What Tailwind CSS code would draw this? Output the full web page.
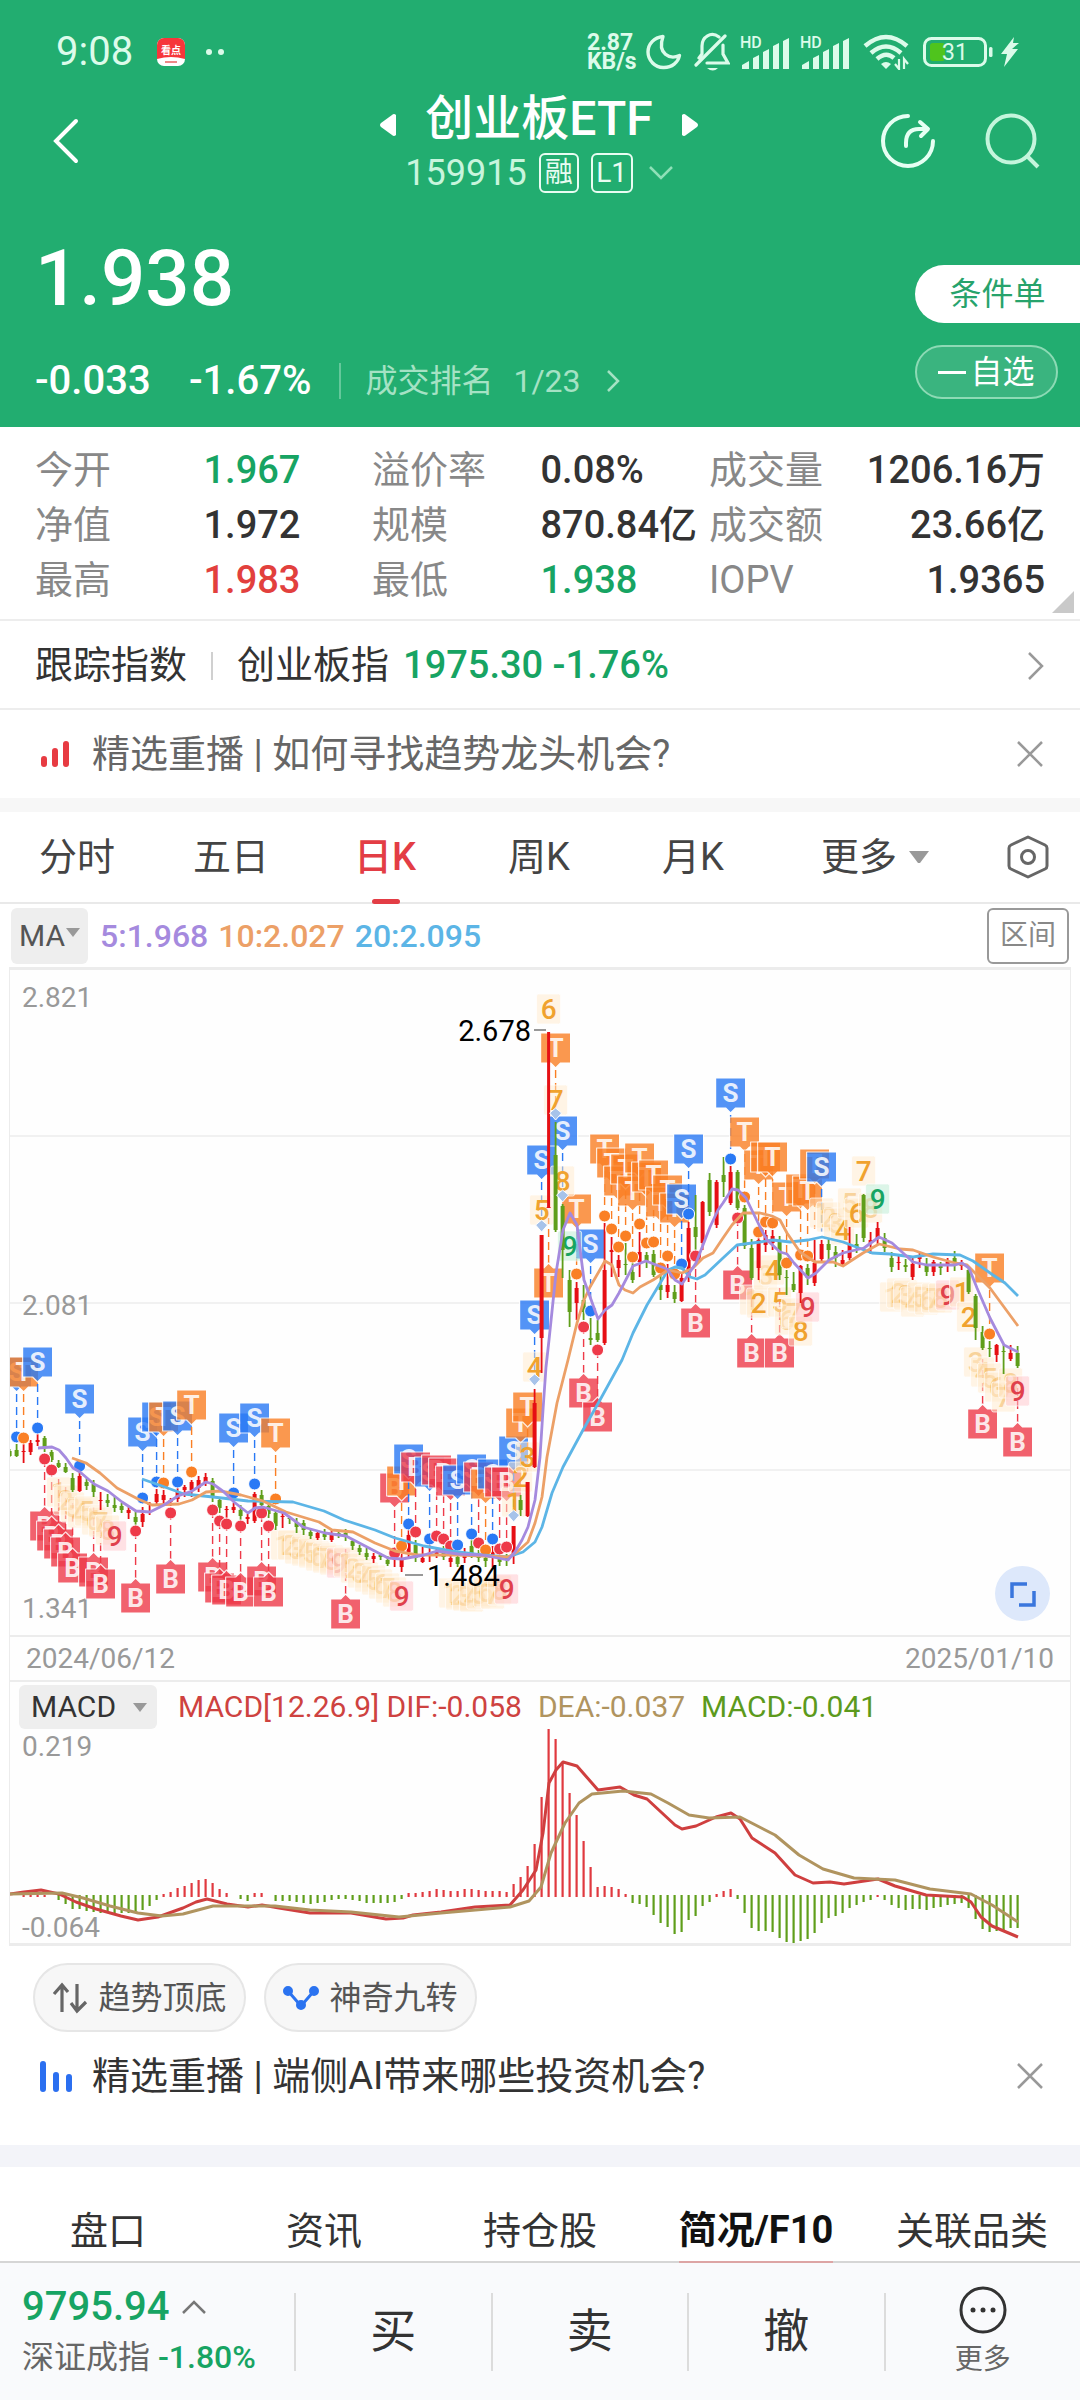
<!DOCTYPE html>
<html lang="zh-CN">

<head>
  <meta charset="UTF-8">
  <meta name="viewport" content="width=device-width, initial-scale=1.0">
  <script src="https://cdn.jsdelivr.net/npm/@tailwindcss/browser@4"></script>
  <title>创业板ETF 159915</title>
</head>

<body class="bg-white text-[#333] font-['Roboto','Noto_Sans_CJK_SC',sans-serif]">

  <header class="bg-[#22ad70] text-white pb-[18px]">
    <!-- 状态栏 -->
    <div class="flex items-center h-[84px] pt-5 pl-14 pr-[60px] text-[#dcfbea]">
      <span class="text-[40px] leading-10">9:08</span>
      <svg class="ml-6 size-7" viewBox="0 0 28 28">
        <rect width="28" height="28" rx="7" fill="#fff" />
        <path d="M0 7a7 7 0 0 1 7-7h14a7 7 0 0 1 7 7v14Q14 17 0 21z" fill="#f6363a" />
        <text x="14" y="16" font-size="10" font-weight="700" text-anchor="middle" fill="#fff">看点</text>
        <path d="M8 24h12" stroke="#e88" stroke-width="2" />
      </svg>
      <svg class="ml-5 w-5 h-2" viewBox="0 0 20 8" fill="currentColor"><circle cx="4" cy="4" r="3" /><circle cx="16" cy="4" r="3" /></svg>

      <div class="ml-auto flex items-center">
        <div class="w-[51px] text-[23px] leading-[19px] font-bold">2.87<br>KB/s</div>
        <svg class="ml-2 w-9 h-9" viewBox="0 0 36 36" fill="none" stroke="currentColor" stroke-width="3.4" stroke-linejoin="round"><path d="M17 2.5C8 3.500 2 10 2 18s7 16 16 15.500c8 0 14-5 15.500-12C24 26 11 20 17 2.500z" /></svg>
        <svg class="ml-3 w-9 h-10" viewBox="0 0 36 40" fill="none" stroke="currentColor" stroke-width="3.200" stroke-linecap="round">
          <path d="M2 33L31 4M25 5C17-1 8 5 8 14v8L5 26M13 31h21l-5-9v-9" />
          <path d="M13 36h11q-5 5-11 0z" fill="currentColor" stroke="none" />
        </svg>
        <svg class="ml-2.5 w-[51px] h-10" viewBox="0 -4 51 40" fill="currentColor">
          <text x="0" y="12" font-size="16" font-weight="500">HD</text>
          <path d="M2 33v-4l7-4v8zM13 33V22l6-3v14zM23 33V16l6-3v20zM33 33V10l6-3v26zM43 33V5l6-3v31z" />
        </svg>
        <svg class="ml-[9px] w-[51px] h-10" viewBox="0 -4 51 40" fill="currentColor">
          <text x="0" y="12" font-size="16" font-weight="500">HD</text>
          <path d="M2 33v-4l7-4v8zM13 33V22l6-3v14zM23 33V16l6-3v20zM33 33V10l6-3v26zM43 33V5l6-3v31z" />
        </svg>
        <svg class="ml-3 w-12 h-9" viewBox="0 0 48 36" fill="none" stroke="currentColor" stroke-width="4.500">
          <path d="M2 12Q23-6 44 12M8 19Q23 6 38 19M14 25Q23 17 31 24" />
          <path d="M18 30q5-4 10 0l-5 5z" fill="currentColor" stroke="none" />
          <path d="M36 25v10l-4-5M41 35V25l4 5" stroke-width="2.200" />
        </svg>
        <svg class="ml-3 w-[71px] h-8" viewBox="0 0 71 32">
          <rect x="1.500" y="2.500" width="61" height="27" rx="7" fill="none" stroke="currentColor" stroke-width="3" />
          <rect x="7" y="7" width="15" height="18" rx="3" fill="#4fc41d" />
          <rect x="66" y="11" width="3.500" height="10" rx="1.500" fill="currentColor" />
          <text x="32" y="24" font-size="23" text-anchor="middle" fill="currentColor">31</text>
        </svg>
        <svg class="ml-1.5 w-5 h-8" viewBox="0 0 20 32" fill="currentColor"><path d="M14 1L1 18h6L4 31 18 13h-6l7-6h-6z" /></svg>
      </div>
    </div>

    <!-- 标题 -->
    <nav class="flex items-center justify-between h-[114px] pl-[53px] pr-[40px]">
      <button type="button" aria-label="返回" class="w-[145px] flex">
        <svg class="w-[26px] h-12" viewBox="0 0 26 48" fill="none" stroke="#fff" stroke-width="4" stroke-linecap="round"><path d="M23 4L3 24l20 20" /></svg>
      </button>
      <div class="flex flex-col items-center pt-2">
        <div class="flex items-center gap-7 h-14">
          <button type="button" aria-label="上一个"><svg class="w-[18px] h-6 mt-3" viewBox="0 0 18 24" fill="#fff"><path d="M17 2v20q-2 2-4 0L2 14q-2-2 0-4L13 2q2-2 4 0z" /></svg></button>
          <h1 class="text-5xl leading-[56px] font-medium">创业板ETF</h1>
          <button type="button" aria-label="下一个"><svg class="w-[18px] h-6 mt-3" viewBox="0 0 18 24" fill="#fff"><path d="M1 2v20q2 2 4 0l11-8q2-2 0-4L5 2Q3 0 1 2z" /></svg></button>
        </div>
        <div class="flex items-center gap-3 h-[52px] text-[#c8f5dd]">
          <span class="text-4xl">159915</span>
          <span class="border-2 rounded-md w-10 h-10 text-[28px] leading-9 text-center text-[#e9fcf2]">融</span>
          <span class="border-2 rounded-md w-[42px] h-10 text-[28px] leading-9 text-center text-[#e9fcf2]">L1</span>
          <svg class="ml-1 w-6 h-4" viewBox="0 0 24 16" fill="none" stroke="#8fe0b8" stroke-width="2.500"><path d="M1 2l11 11L23 2" /></svg>
        </div>
      </div>
      <div class="flex gap-12">
        <button type="button" aria-label="分享">
          <svg class="w-[56px] h-[56px]" viewBox="0 0 56 56" fill="none" stroke="#e6fff3" stroke-width="4" stroke-linecap="round" stroke-linejoin="round">
            <path d="M28 3A25 25 0 1 0 53 28M26 33v-3q0-14 13-14h8M40 9l8 7-7 7" />
          </svg>
        </button>
        <button type="button" aria-label="搜索">
          <svg class="w-[56px] h-[56px]" viewBox="0 0 56 56" fill="none" stroke="#c4f5dc" stroke-width="4"><circle cx="27" cy="26" r="23.500" /><path d="M44 44l10 10" /></svg>
        </button>
      </div>
    </nav>

    <!-- 现价 -->
    <section class="flex justify-between pt-[31px]">
      <div class="pl-[35px]">
        <div class="text-[78px] leading-[100px] font-medium">1.938</div>
        <div class="mt-6 flex items-center h-14 text-[40px] font-medium">
          <span class="w-[154px]">-0.033</span>
          <span>-1.67%</span>
          <span class="w-0.5 h-9 bg-[#64c89b] ml-7 mr-6"></span>
          <a href="#" class="flex items-center text-[32px] font-normal text-[#a5e2c4]">
            成交排名<span class="ml-5">1/23</span>
            <svg class="ml-6 w-4 h-6" viewBox="0 0 16 24" fill="none" stroke="#a5e2c4" stroke-width="2.500"><path d="M3 2l10 10L3 22" /></svg>
          </a>
        </div>
      </div>
      <div class="flex flex-col items-end mt-9 gap-[22px]">
        <button type="button" class="w-[165px] h-[58px] rounded-l-full bg-white text-[#27a36c] text-[32px]">条件单</button>
        <button type="button" class="w-[143px] h-[54px] mr-[22px] rounded-full border-2 border-[#8ddab5] bg-[#3ab47f] text-[32px] leading-none flex items-center justify-center gap-1">
          <span class="w-7 h-[3px] bg-white"></span>自选
        </button>
      </div>
    </section>
  </header>

  <main>
    <section class="relative px-[35px] pt-4 pb-[11px] border-b-2 border-[#ededed]">
      <dl class="grid grid-cols-[1fr_1fr_1fr_1fr_9rem_auto] text-[38px] leading-[55px] whitespace-nowrap [&_dt]:text-[#888] [&_dd]:font-medium">
        <dt>今开</dt><dd class="text-[#17a463]">1.967</dd>
        <dt>溢价率</dt><dd>0.08%</dd>
        <dt>成交量</dt><dd class="w-48 flex justify-end">1206.16万</dd>
        <dt>净值</dt><dd>1.972</dd>
        <dt>规模</dt><dd>870.84亿</dd>
        <dt>成交额</dt><dd class="text-right">23.66亿</dd>
        <dt>最高</dt><dd class="text-[#e2403d]">1.983</dd>
        <dt>最低</dt><dd class="text-[#17a463]">1.938</dd>
        <dt>IOPV</dt><dd class="text-right">1.9365</dd>
      </dl>
      <svg class="absolute right-1.5 bottom-1.5 size-[22px]" viewBox="0 0 22 22"><path d="M22 0v22H0z" fill="#c9c9c9" /></svg>
    </section>

    <a href="#" class="flex items-center h-[89px] pt-0.5 px-[35px] text-[38px] border-b-2 border-[#ededed]">
      跟踪指数
      <span class="w-0.5 h-7 bg-[#d0d0d0] mx-6"></span>
      创业板指
      <span class="ml-3.5 text-[#17a463] font-medium">1975.30 -1.76%</span>
      <svg class="ml-auto w-[18px] h-8" viewBox="0 0 18 32" fill="none" stroke="#999" stroke-width="2.500"><path d="M2 3l13 13L2 29" /></svg>
    </a>

    <section class="flex items-center h-[88px] pl-10 pr-9 text-[38px] text-[#666]">
      <svg class="w-8 h-7 mr-5" viewBox="0 0 32 28" stroke="#e73b42" stroke-width="6" stroke-linecap="round"><path d="M4 19v5M15 11v13M26 4v20" /></svg>
      精选重播 | 如何寻找趋势龙头机会?
      <button type="button" aria-label="关闭" class="ml-auto"><svg class="size-7" viewBox="0 0 28 28" stroke="#999" stroke-width="2.500"><path d="M2 2l24 24M26 2L2 26" /></svg></button>
    </section>

    <div class="h-3.5 bg-[#f7f7f7]"></div>

    <!-- 周期 -->
    <nav class="flex items-stretch h-[92px] border-b-2 border-[#e9e9e9] text-[38px] text-[#444]">
      <button type="button" class="w-[154px]">分时</button>
      <button type="button" class="w-[154px]">五日</button>
      <button type="button" class="w-[154px] relative font-medium text-[#e33d45]">日K<span class="absolute left-16 -bottom-0.5 w-7 h-[5px] rounded-sm bg-[#e33d45]"></span></button>
      <button type="button" class="w-[154px]">周K</button>
      <button type="button" class="w-[154px]">月K</button>
      <button type="button" class="ml-[51px] flex items-center gap-3">更多<svg class="w-5 h-3.5" viewBox="0 0 20 14" fill="#999"><path d="M0 1h20L11 13H9z" /></svg></button>
      <button type="button" aria-label="设置" class="ml-auto mr-[31px]">
        <svg class="w-[42px] h-11" viewBox="0 0 42 44" fill="none" stroke="#666" stroke-width="3" stroke-linejoin="round"><path d="M21 2l17 8q2 1 2 3v18q0 2-2 3l-17 8-17-8q-2-1-2-3V13q0-2 2-3z" /><circle cx="21" cy="22" r="6.500" /></svg>
      </button>
    </nav>

    <div class="flex items-center gap-3 h-[63px] px-[11px] text-[32px]">
      <label class="relative">
        <select aria-label="主图指标" class="appearance-none w-[77px] h-[56px] pl-2 rounded-md bg-[#eee] text-[#555] text-[30px]"><option>MA</option></select>
        <svg class="absolute right-2 top-5 w-3.5 h-2.5" viewBox="0 0 14 10" fill="#999"><path d="M0 0h14L7 9z" /></svg>
      </label>
      <div class="flex gap-2.5 whitespace-nowrap font-medium">
        <span class="text-[#a58ade]">5:1.968</span>
        <span class="text-[#eca067]">10:2.027</span>
        <span class="text-[#5cb5e6]">20:2.095</span>
      </div>
      <button type="button" class="ml-auto w-[82px] h-[56px] border-2 border-[#999] rounded-md text-[28px] text-[#888]">区间</button>
    </div>

    <!-- 图表 -->
    <section class="mx-[9px] border border-t-[3px] border-b-[3px] border-[#ececec] bg-[#fefefe] text-[28px] text-[#999]">
      <div class="relative">
        <svg id="kline" class="block w-full h-auto" viewBox="10 970 1060 665"></svg>
        <button type="button" aria-label="全屏" class="absolute right-5 bottom-3.5 size-[55px] rounded-full bg-[#dde8fb] flex items-center justify-center">
          <svg class="size-7" viewBox="0 0 28 28" fill="none" stroke="#3a76dd" stroke-width="3.500"><path d="M3 18V4h15M25 11v14H10" /></svg>
        </button>
      </div>
      <div class="flex items-center justify-between h-[45px] border-t-2 border-[#ececec] px-4"><span>2024/06/12</span><span>2025/01/10</span></div>
      <div class="flex items-center h-12 pt-1 border-t-2 border-[#ececec] pl-[9px] whitespace-nowrap text-[30px] leading-10">
        <label class="relative flex">
          <select aria-label="副图指标" class="appearance-none w-[138px] h-11 pl-3 rounded-md bg-[#eee] text-[#333] text-[30px] leading-10"><option>MACD</option></select>
          <svg class="absolute right-2.5 top-[18px] w-3.5 h-2.5" viewBox="0 0 14 10" fill="#999"><path d="M0 0h14L7 9z" /></svg>
        </label>
        <span class="ml-[21px] text-[#ce4240]">MACD[12.26.9] DIF:-0.058</span>
        <span class="ml-4 text-[#b0945f]">DEA:-0.037</span>
        <span class="ml-4 text-[#5c9a1c]">MACD:-0.041</span>
      </div>
      <svg id="macd" class="block w-full h-auto" viewBox="10 1728 1060 215"></svg>
    </section>

    <div class="flex gap-[18px] mt-[17px] pl-[33px] text-[32px] text-[#555]">
      <button type="button" class="flex items-center justify-center gap-2.5 w-[213px] h-[69px] rounded-full border-2 border-[#e6e6e6] bg-[#f7f7f7]">
        <svg class="w-9 h-8" viewBox="0 0 36 32" fill="none" stroke="#666" stroke-width="3.200"><path d="M10 30V4M2 12l8-9 6 7M25 2v26M19 21l6 8 9-9" /></svg>趋势顶底
      </button>
      <button type="button" class="flex items-center justify-center gap-2.5 w-[213px] h-[69px] rounded-full border-2 border-[#e6e6e6] bg-[#f7f7f7]">
        <svg class="w-9 h-8" viewBox="0 0 36 32" fill="#2b73f0" stroke="#2b73f0" stroke-width="3"><path d="M5 9l13 15L31 9" fill="none" /><circle cx="5" cy="9" r="3.500" /><circle cx="31" cy="9" r="3.500" /><circle cx="18" cy="23" r="3.500" /></svg>神奇九转
      </button>
    </div>

    <section class="flex items-center h-[88px] pl-10 pr-9 text-[38px]">
      <svg class="w-8 h-8 mr-5" viewBox="0 0 32 32" stroke="#2b6ff0" stroke-width="6" stroke-linecap="round"><path d="M3 4v25M16 15v14M29 17v12" /></svg>
      精选重播 | 端侧AI带来哪些投资机会?
      <button type="button" aria-label="关闭" class="ml-auto"><svg class="size-7" viewBox="0 0 28 28" stroke="#999" stroke-width="2.500"><path d="M2 2l24 24M26 2L2 26" /></svg></button>
    </section>

    <div class="mt-[25px] h-[22px] bg-[#f3f4f9]"></div>

    <nav class="grid grid-cols-5 h-[94px] pt-8 text-[38px] leading-[62px]">
      <button type="button">盘口</button>
      <button type="button">资讯</button>
      <button type="button">持仓股</button>
      <button type="button" class="justify-self-center font-bold text-[#111] border-b-2 border-[#dda5a5]">简况/F10</button>
      <button type="button">关联品类</button>
    </nav>
  </main>

  <footer class="flex items-center h-[139px] border-t-2 border-[#d6d6d6] bg-[#f9fafc]">
    <div class="w-[294px] pl-[22px]">
      <div class="flex items-center gap-3 text-[40px] leading-[50px] font-medium text-[#17a463]">9795.94
        <svg class="w-6 h-4" viewBox="0 0 24 16" fill="none" stroke="#777" stroke-width="2.500"><path d="M1 14L12 3l11 11" /></svg>
      </div>
      <div class="text-[32px] leading-[50px] text-[#666] whitespace-nowrap">深证成指 <span class="font-medium text-[#17a463]">-1.80%</span></div>
    </div>
    <button type="button" class="flex-1 h-[78px] border-l-2 border-[#dcdcdc] text-[46px]">买</button>
    <button type="button" class="flex-1 h-[78px] border-l-2 border-[#dcdcdc] text-[46px]">卖</button>
    <button type="button" class="flex-1 h-[78px] border-l-2 border-[#dcdcdc] text-[46px]">撤</button>
    <div class="flex-1 flex items-center h-[78px] border-l-2 border-[#dcdcdc]">
      <button type="button" class="flex-1 flex flex-col items-center gap-2 text-[28px] leading-9 text-[#666]">
        <svg class="size-12" viewBox="0 0 48 48" fill="none" stroke="#333" stroke-width="3"><circle cx="24" cy="24" r="22" /><g fill="#333" stroke="none"><circle cx="14" cy="24" r="2.500" /><circle cx="24" cy="24" r="2.500" /><circle cx="34" cy="24" r="2.500" /></g></svg>更多
      </button>
    </div>
  </footer>

  <script>
    const RED = '#e60f14', GREEN = '#5f9e1a';
    const COLORS = { S: '#2979f5', T: '#fa7f24', B: '#ee3a49', b: '#ee3a49' };
    const px = i => 9.6 + i * 7;

    // [颜色, 最高, 实体上, 实体下, 最低]
    const candles = `g 1449 1451 1456 1457|g 1444 1450 1456 1457|r 1444 1451 1452 1463|r 1440 1443 1452 1455|r 1434 1440 1442 1446|g 1436 1438 1448 1452|g 1450 1452 1460 1462|g 1460 1463 1467 1468|g 1463 1467 1472 1473|g 1473 1478 1490 1492
r 1472 1476 1491 1492|g 1478 1482 1486 1490|g 1480 1484 1492 1497|r 1492 1500 1501 1510|g 1494 1500 1503 1507|g 1496 1505 1508 1512|g 1503 1506 1510 1513|r 1507 1510 1513 1519|g 1511 1517 1522 1526|r 1507 1514 1522 1527
r 1502 1504 1505 1515|r 1489 1494 1502 1504|r 1490 1495 1500 1506|r 1498 1500 1502 1506|r 1488 1492 1499 1502|r 1485 1487 1490 1497|r 1480 1482 1490 1497|r 1476 1480 1488 1492|r 1473 1477 1482 1486|g 1478 1481 1497 1502
g 1497 1500 1508 1513|r 1506 1509 1510 1518|r 1503 1507 1510 1513|g 1505 1510 1516 1520|r 1514 1517 1519 1524|r 1492 1494 1521 1523|g 1490 1495 1505 1508|g 1502 1506 1514 1518|g 1510 1513 1526 1530|r 1513 1516 1517 1528
g 1516 1518 1519 1524|g 1518 1522 1527 1533|g 1520 1523 1530 1535|g 1529 1532 1536 1539|r 1531 1533 1538 1540|g 1529 1534 1537 1540|r 1531 1535 1540 1542|g 1531 1533 1535 1538|g 1529 1533 1537 1541|g 1539 1541 1546 1550
g 1545 1548 1552 1555|g 1548 1553 1557 1560|r 1553 1556 1559 1563|g 1553 1555 1557 1560|g 1556 1560 1564 1566|r 1550 1557 1560 1567|r 1554 1558 1567 1572|r 1530 1535 1552 1559|g 1540 1545 1558 1562|r 1547 1558 1562 1563
r 1545 1554 1556 1562|r 1548 1552 1556 1558|g 1546 1552 1557 1560|r 1548 1558 1562 1567|g 1552 1557 1564 1567|r 1548 1555 1558 1563|g 1540 1546 1554 1558|g 1550 1555 1558 1562|g 1555 1558 1561 1567|r 1546 1552 1556 1567
g 1555 1558 1562 1566|g 1554 1557 1560 1566|r 1526 1526 1556 1564|g 1495 1500 1510 1516|r 1482 1482 1516 1517|r 1389 1403 1467 1468|r 1235 1235 1338 1373|r 1032 1207 1208 1208|g 1122 1155 1230 1232|g 1204 1206 1250 1278
g 1270 1280 1312 1327|r 1282 1288 1303 1320|g 1285 1300 1312 1320|g 1318 1338 1340 1345|g 1320 1333 1340 1342|r 1223 1270 1343 1345|r 1237 1250 1252 1277|r 1255 1260 1268 1277|g 1243 1264 1265 1275|g 1262 1272 1280 1283
r 1232 1252 1262 1277|g 1252 1255 1262 1268|g 1250 1254 1275 1277|g 1268 1285 1290 1300|r 1264 1285 1292 1298|g 1285 1292 1299 1303|r 1272 1278 1301 1302|r 1222 1228 1278 1282|g 1195 1227 1237 1250|r 1201 1202 1243 1250
g 1173 1180 1212 1216|r 1180 1182 1225 1228|g 1157 1175 1182 1197|r 1166 1172 1203 1205|g 1170 1172 1208 1210|g 1205 1208 1246 1249|g 1239 1248 1278 1280|r 1235 1240 1268 1280|r 1230 1235 1245 1252|r 1230 1236 1243 1250
g 1236 1240 1275 1280|g 1270 1277 1278 1295|g 1272 1284 1290 1292|r 1265 1266 1293 1303|g 1264 1268 1278 1285|r 1240 1263 1283 1286|r 1240 1244 1259 1262|g 1238 1244 1250 1260|g 1246 1252 1258 1267|r 1250 1260 1264 1266
r 1227 1245 1258 1260|g 1234 1244 1247 1253|g 1194 1195 1238 1242|r 1232 1240 1243 1254|r 1222 1228 1238 1244|g 1233 1238 1248 1252|g 1252 1258 1267 1272|r 1256 1262 1263 1270|g 1259 1265 1267 1272|r 1258 1264 1277 1280
r 1252 1257 1259 1268|g 1258 1265 1272 1276|r 1260 1262 1272 1276|g 1262 1266 1268 1275|r 1258 1262 1264 1272|g 1251 1258 1262 1271|r 1260 1263 1266 1270|g 1267 1270 1292 1294|g 1294 1296 1328 1340|g 1326 1332 1348 1350
g 1341 1348 1349 1357|r 1344 1345 1355 1362|g 1345 1351 1352 1374|r 1345 1353 1359 1361|g 1346 1353 1366 1368`.split(/[|\n]/).map(s => s.trim().split(' '));

    // [类型, K线序号, 标签顶部, 圆点, 是否反向]
    const signals = [
      ['S', 1, 1357, 1437], ['T', 2, 1357, 1438], ['S', 4, 1347, 1428], ['S', 10, 1384, 1466], ['S', 19, 1417, 1498],
      ['S', 21, 1402, 1482], ['T', 22, 1402, 1483], ['S', 24, 1401, 1482], ['T', 26, 1390, 1472], ['S', 32, 1413, 1493],
      ['S', 35, 1403, 1484], ['T', 38, 1418, 1499],
      ['B', 5, 1511, 1459], ['B', 6, 1521, 1470], ['B', 7, 1529, 0], ['B', 8, 1537, 0], ['B', 9, 1553, 0], ['B', 12, 1557, 0],
      ['B', 13, 1569, 0], ['B', 18, 1583, 1531], ['B', 23, 1564, 1513], ['B', 29, 1562, 1510], ['B', 30, 1573, 1521],
      ['B', 31, 1575, 1524], ['B', 33, 1577, 1526], ['B', 36, 1566, 1513], ['B', 37, 1577, 1526], ['B', 48, 1599, 0],
      ['b', 55, 1473, 1553], ['T', 56, 1466, 1546], ['S', 57, 1444, 1524], ['b', 58, 1452, 1532], ['S', 60, 1457, 1539],
      ['b', 61, 1455, 1536], ['b', 62, 1458, 1539], ['b', 63, 1466, 1546], ['S', 64, 1465, 1545], ['S', 66, 1454, 1534],
      ['b', 67, 1462, 1543], ['T', 68, 1469, 1550], ['S', 69, 1459, 1539], ['b', 70, 1467, 1549], ['b', 71, 1467, 1547],
      ['S', 72, 1436, 0], ['T', 73, 1408, 0], ['T', 74, 1392, 0], ['S', 75, 1300, 0], ['S', 76, 1145, 0], ['T', 77, 1268, 0, 1],
      ['T', 78, 1033, 0], ['S', 79, 1116, 0], ['T', 81, 1194, 1274], ['B', 82, 1378, 1327], ['S', 83, 1229, 1311], ['B', 84, 1402, 1350],
      ['T', 85, 1134, 1216], ['T', 86, 1148, 1229], ['T', 87, 1166, 1247], ['T', 88, 1154, 1236], ['T', 89, 1176, 1257],
      ['T', 90, 1143, 1224], ['T', 91, 1162, 1243], ['T', 92, 1160, 1242], ['T', 93, 1187, 1268], ['T', 94, 1175, 1256],
      ['T', 95, 1193, 1274], ['S', 96, 1184, 1264], ['S', 97, 1134, 1214], ['B', 98, 1308, 1256], ['S', 103, 1078, 1159],
      ['B', 104, 1270, 1218], ['T', 105, 1117, 1197], ['T', 107, 1150, 1232], ['T', 108, 1142, 1222], ['T', 109, 1142, 1223],
      ['B', 106, 1338, 0], ['B', 110, 1338, 0], ['T', 111, 1182, 1263], ['T', 113, 1174, 1255], ['T', 114, 1176, 1256],
      ['T', 115, 1149, 0], ['S', 116, 1152, 0], ['T', 140, 1253, 1334], ['B', 139, 1409, 0], ['B', 144, 1427, 0]
    ];

    // 神奇九转: [起始序号, 末位颜色, 高亮数字, 各数字的中心]
    const nines = [
      [7, 'r', '9', [1492, 1500, 1507, 1513, 1511, 1520, 1522, 1530, 1536]],
      [39, 'p', '', [1545, 1545, 1549, 1551, 1553, 1556, 1558, 1560, 1563]],
      [48, 'r', '9', [1562, 1568, 1573, 1577, 1580, 1584, 1588, 1592, 1596]],
      [63, 'r', '9', [1593, 1595, 1596, 1597, 1594, 1592, 1594, 1590, 1589]],
      [72, 'g', '123456789', [1502, 1477, 1457, 1367, 1210, 1009, 1100, 1181, 1246]],
      [106, 'r', '24589', [1300, 1303, 1275, 1270, 1302, 1320, 1313, 1331, 1307]],
      [116, 'g', '4679', [1213, 1217, 1223, 1230, 1203, 1213, 1171, 1208, 1199]],
      [126, 'r', '9', [1297, 1293, 1295, 1302, 1297, 1300, 1298, 1298, 1295]],
      [136, 'r', '129', [1292, 1317, 1362, 1372, 1378, 1387, 1397, 1383, 1391]]
    ];

    const lines = {
      '#5cb5e6': '142,1479 162,1486 184,1494 213,1497 248,1501 293,1502 324,1511 344,1520 375,1530 395,1538 424,1546 451,1551 482,1555 508,1557 523,1552 535,1542 542,1527 552,1493 563,1467 583,1430 600,1400 622,1360 633,1333 647,1305 668,1270 675,1267 682,1268 690,1277 697,1279 705,1275 723,1258 737,1245 760,1242 773,1240 790,1242 808,1240 822,1237 843,1242 872,1253 890,1254 913,1257 933,1254 960,1255 973,1261 993,1275 1005,1283 1018,1296',
      '#eca067': '72,1458 86,1463 100,1473 117,1488 138,1499 152,1505 179,1504 192,1500 206,1492 220,1491 241,1495 263,1501 286,1512 319,1522 332,1530 353,1532 375,1543 395,1551 417,1555 458,1555 482,1556 508,1557 517,1552 528,1542 535,1523 542,1497 547,1457 557,1403 568,1360 577,1323 584,1300 590,1287 605,1261 612,1265 619,1285 625,1290 633,1293 640,1287 653,1280 668,1270 682,1273 693,1268 703,1258 713,1253 723,1238 732,1225 743,1213 760,1213 772,1216 780,1220 787,1233 800,1252 815,1262 833,1262 843,1266 863,1253 879,1244 900,1249 913,1250 933,1257 955,1263 967,1265 990,1288 1004,1307 1018,1326',
      '#a58ade': '38,1448 52,1447 59,1450 66,1458 73,1468 80,1472 87,1478 94,1484 108,1491 122,1502 136,1511 150,1512 164,1505 178,1496 192,1491 206,1482 213,1484 224,1492 234,1502 248,1513 255,1508 263,1507 284,1513 303,1527 325,1533 346,1536 367,1547 388,1558 402,1559 424,1555 437,1551 458,1554 482,1555 508,1560 515,1552 522,1540 528,1527 535,1500 540,1457 543,1410 546,1367 549,1340 556,1273 563,1230 570,1213 577,1225 584,1280 598,1319 605,1310 612,1305 619,1293 633,1266 646,1261 667,1269 675,1280 682,1284 696,1263 710,1227 718,1210 723,1203 732,1189 738,1190 746,1198 760,1227 767,1240 780,1252 787,1254 794,1263 808,1278 816,1273 829,1260 843,1253 864,1248 879,1237 892,1243 913,1262 927,1265 955,1265 962,1263 969,1268 977,1288 990,1318 1004,1345 1018,1352'
    };

    function label([t, i, y, dot, flip]) {
      const x = px(i), up = t === 'B' || flip;
      const box = up
        ? `M${x - 15} ${y}h10l5-5 5 5h10v30h-30z`
        : `M${x - 15} ${y}h30v30h-10l-5 5-5-5h-10z`;
      const stemFrom = up ? y - 5 : y + 37, stemTo = dot || (up ? y - 50 : y + 80);
      return `<path d="M${x} ${stemFrom}V${stemTo}" stroke="${COLORS[t]}" stroke-width="1.4" stroke-dasharray="8 5"/>
        <g opacity=".8"><path d="${box}" fill="${COLORS[t]}" stroke="#fff" stroke-width="1.2" stroke-linejoin="round"/></g>
        <text x="${x}" y="${y + 24}" font-size="26" font-weight="700" text-anchor="middle" fill="#fff" opacity=".85">${t.toUpperCase()}</text>`;
    }

    function nine([start, end, strong, ys]) {
      return ys.map((y, k) => {
        const n = k + 1, x = px(start + k), last = n === 9;
        const bg = !last ? '#ffe9cc' : end === 'g' ? '#b9ecd2' : '#ffc4c9';
        const fg = !last ? '#f0a22e' : end === 'g' ? '#17a463' : '#e0404c';
        return `<rect x="${x - 12}" y="${y - 15}" width="24" height="30" rx="2" fill="${bg}" stroke="#fff" fill-opacity=".5" stroke-opacity=".7"/>
          <text x="${x}" y="${y + 10}" font-size="28" font-weight="500" text-anchor="middle" fill="${fg}" opacity="${strong.includes(n) ? 1 : .4}">${n}</text>`;
      }).join('');
    }

    const grid = [1136, 1303, 1470].map(y => `<path d="M10 ${y}H1070" stroke="#f1f1f1" stroke-width="2"/>`).join('');
    const axis = [[2.821, 1007], [2.081, 1315], [1.341, 1618]]
      .map(([v, y]) => `<text x="22" y="${y}" font-size="28" fill="#999">${v}</text>`).join('');
    const bodies = candles.map(([c, h, a, b, l], i) => {
      const color = c === 'r' ? RED : GREEN;
      return `<path d="M${px(i)} ${h}V${l}" stroke="${color}" stroke-width="${i === 77 ? 3 : 1.8}"/><rect x="${px(i) - 2}" y="${a}" width="4" height="${b - a}" fill="${color}"/>`;
    }).join('');
    const dots = signals.filter(s => s[3])
      .map(s => `<circle cx="${px(s[1])}" cy="${s[3]}" r="6" fill="${COLORS[s[0]]}" stroke="#fff"/>`).join('');
    const diamonds = [[72, 1516], [75, 1380], [76, 1226], [78, 1114], [79, 1196]]
      .map(([i, y]) => `<path d="M${px(i)} ${y - 6}l6 5-6 7-6-7z" fill="#a7c3ea" stroke="#fff"/>`).join('');
    const mas = Object.entries(lines)
      .map(([c, p]) => `<polyline points="${p}" fill="none" stroke="${c}" stroke-width="2.8" stroke-linejoin="round"/>`).join('');
    const extremes = `<path d="M534 1030h12M405 1575h18" stroke="#777" stroke-width="1.6"/>
      <text x="531" y="1041" font-size="29" text-anchor="end" fill="#000">2.678</text>
      <text x="427" y="1586" font-size="29" fill="#000">1.484</text>`;

    document.getElementById('kline').innerHTML =
      grid + axis + signals.map(label).join('') + nines.map(nine).join('') + bodies + dots + diamonds + mas + extremes;

    // MACD
    const bars = [0, 0, 2, 2, 2, 2, 0, -5, -9, -14, -14, -16, -17, -18, -18, -18, -18, -18, -17, -15, -11, -5, 3, 5, 9, 11, 14, 17, 18, 14,
      8, 4, 0, -4, -6, 4, 4, 0, -6, -6, -6, -7, -8, -9, -8, -7, -5, -4, -4, -5, -6, -8, -8, -8, -8, -7, -4, 4, 4, 5,
      6, 8, 7, 6, 6, 8, 8, 7, 6, 6, 6, 5, 13, 20, 31, 53, 100, 168, 158, 135, 104, 82, 56, 30, 10, 11, 10, 8, 3, -8,
      -9, -12, -20, -28, -32, -39, -37, -25, -21, -11, -7, 3, 6, 8, -4, -18, -33, -36, -36, -37, -43, -47, -50, -46, -44, -38, -28, -23, -21, -18,
      -13, -10, -7, -5, 2, -5, -10, -13, -15, -14, -14, -15, -13, -12, -10, -9, -8, -13, -24, -34, -37, -36, -35, -33, -33];
    const dif = '10,1894 24,1892 41,1890 59,1894 76,1902 96,1909 121,1916 138,1920 158,1917 183,1908 196,1902 207,1899 227,1904 248,1907 262,1905 279,1908 310,1913 351,1913 386,1919 403,1918 413,1915 441,1912 475,1907 510,1905 523,1890 536,1870 543,1833 549,1783 556,1770 563,1762 577,1766 598,1790 620,1787 634,1795 647,1799 675,1825 682,1829 696,1826 716,1817 731,1813 740,1819 752,1838 775,1853 795,1875 813,1883 830,1882 844,1884 878,1879 895,1886 926,1895 963,1897 971,1902 981,1917 992,1926 1018,1937';
    const dea = '10,1894 62,1893 83,1898 110,1906 138,1913 162,1916 183,1914 213,1906 275,1906 310,1910 351,1912 399,1917 441,1913 510,1907 529,1901 541,1887 551,1853 565,1823 579,1803 592,1794 623,1791 651,1794 668,1803 689,1815 709,1818 740,1817 775,1835 799,1855 823,1869 854,1878 895,1880 930,1889 971,1894 992,1905 1018,1922';

    document.getElementById('macd').innerHTML =
      bars.map((v, i) => v && `<path d="M${px(i)} ${v > 0 ? 1897 : 1895}v${-v}" stroke="${v > 0 ? '#e0393f' : GREEN}" stroke-width="2.2"/>`).filter(Boolean).join('') +
      `<polyline points="${dif}" fill="none" stroke="#cf3f3f" stroke-width="3" stroke-linejoin="round"/>
       <polyline points="${dea}" fill="none" stroke="#b0945f" stroke-width="3" stroke-linejoin="round"/>
       <text x="22" y="1756" font-size="28" fill="#999">0.219</text>
       <text x="22" y="1937" font-size="28" fill="#999">-0.064</text>`;
  </script>

</body>

</html>
